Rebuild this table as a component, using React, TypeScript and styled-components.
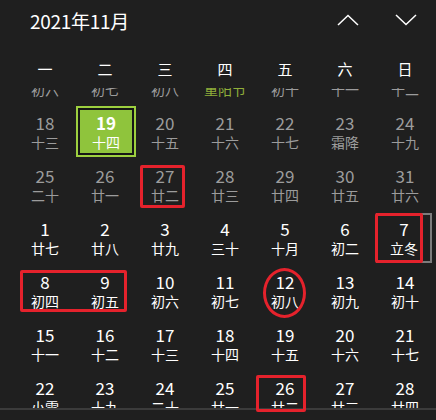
import styled, { createGlobalStyle } from "styled-components"

const GlobalStyle = createGlobalStyle`
  body {
    margin: 0;
    background: #1f1f1f;
    font-family: "Noto Sans CJK SC", "Noto Sans", sans-serif;
    color: #ffffff;
  }
`

const Panel = styled.div`
  position: relative;
  width: 436px;
  height: 420px;
  overflow: hidden;
  background: #1f1f1f;
`

const Header = styled.div`
  display: flex;
  align-items: center;
  justify-content: space-between;
  height: 40px;
  padding: 0 18px 0 30px;
`

const Title = styled.div`
  font-size: 19px;
  letter-spacing: -0.3px;
`

const NavGroup = styled.div`
  display: flex;
  align-items: center;
  gap: 34px;
`

const NavButton = styled.div`
  display: flex;
  align-items: center;
  justify-content: center;
  width: 24px;
  height: 24px;
`

const WeekRow = styled.div`
  display: grid;
  grid-template-columns: repeat(7, 60px);
  align-items: center;
  height: 40px;
  margin-top: 8px;
  padding-left: 16px;
  font-size: 15px;
`

const WeekDay = styled.div`
  text-align: center;
  padding-right: 2px;
`

const Viewport = styled.div`
  height: 320px;
  overflow: hidden;
`

const DayGrid = styled.div`
  display: grid;
  grid-template-columns: repeat(7, 60px);
  grid-auto-rows: 53px;
  margin-top: -34px;
  padding-left: 16px;
`

const DayCell = styled.div<{ $muted?: boolean; $today?: boolean; $hover?: boolean }>`
  display: flex;
  flex-direction: column;
  align-items: center;
  box-sizing: border-box;
  width: ${(p) => (p.$today ? 60 : p.$hover ? 56 : 58)}px;
  height: ${(p) => (p.$today ? 51 : 50)}px;
  margin-top: ${(p) => (p.$today ? -1 : 0)}px;
  padding-top: ${(p) => (p.$today ? 5 : p.$hover ? 4 : 6)}px;
  color: ${(p) => (p.$muted ? "#9c9c9c" : "#ffffff")};
  background: ${(p) => (p.$today ? "#8fc43c" : "transparent")};
  border: ${(p) => (p.$today ? "2px solid #9dd03f" : p.$hover ? "2px solid #7c7c7c" : "none")};
  box-shadow: ${(p) => (p.$today ? "inset 0 0 0 2px #161616" : "none")};
`

const DayNum = styled.div<{ $bold?: boolean }>`
  font-size: 17px;
  line-height: 20px;
  font-weight: ${(p) => (p.$bold ? 700 : 400)};
`

const Lunar = styled.div<{ $festival?: boolean }>`
  font-size: 14px;
  line-height: 18px;
  color: ${(p) => (p.$festival ? "#8fae3a" : "inherit")};
`

const Divider = styled.div`
  height: 2px;
  background: #3b3b3b;
`

const Mark = styled.div<{ $round?: boolean }>`
  position: absolute;
  box-sizing: border-box;
  border: 3px solid #e5222c;
  border-radius: ${(p) => (p.$round ? "50%" : "2px")};
  pointer-events: none;
`

type Day = { d: number; lunar: string; muted?: boolean; festival?: boolean }

const octLunar: Record<number, string> = {
  11: "初六", 12: "初七", 13: "初八", 14: "重阳节", 15: "初十", 16: "十一", 17: "十二",
  18: "十三", 19: "十四", 20: "十五", 21: "十六", 22: "十七", 23: "霜降", 24: "十九",
  25: "二十", 26: "廿一", 27: "廿二", 28: "廿三", 29: "廿四", 30: "廿五", 31: "廿六",
}

const novLunar = [
  "廿七", "廿八", "廿九", "三十", "十月", "初二", "立冬",
  "初四", "初五", "初六", "初七", "初八", "初九", "初十",
  "十一", "十二", "十三", "十四", "十五", "十六", "十七",
  "小雪", "十九", "二十", "廿一", "廿二", "廿三", "廿四",
]

const days: Day[] = [
  ...Object.keys(octLunar).map((k) => ({
    d: Number(k),
    lunar: octLunar[Number(k)],
    muted: true,
    festival: Number(k) === 14,
  })),
  ...novLunar.map((l, i) => ({ d: i + 1, lunar: l })),
]

const Chevron = ({ up }: { up?: boolean }) => (
  <svg width="22" height="12" viewBox="0 0 22 12">
    <polyline
      points={up ? "1,11 11,1.5 21,11" : "1,1 11,10.5 21,1"}
      fill="none"
      stroke="#ffffff"
      strokeWidth="1.5"
    />
  </svg>
)

const weekNames = ["一", "二", "三", "四", "五", "六", "日"]

const App = () => {
  return <Panel>
    <GlobalStyle />
    <Header>
      <Title>2021年11月</Title>
      <NavGroup>
        <NavButton><Chevron up /></NavButton>
        <NavButton><Chevron /></NavButton>
      </NavGroup>
    </Header>
    <WeekRow>
      {weekNames.map((w) => <WeekDay key={w}>{w}</WeekDay>)}
    </WeekRow>
    <Viewport>
      <DayGrid>
        {days.map((day) => {
          const today = day.muted && day.d === 19
          const hover = !day.muted && day.d === 7
          return <DayCell key={(day.muted ? "o" : "n") + day.d} $muted={day.muted && !today} $today={today} $hover={hover}>
            <DayNum $bold={today}>{day.d}</DayNum>
            <Lunar $festival={day.festival}>{day.lunar}</Lunar>
          </DayCell>
        })}
      </DayGrid>
    </Viewport>
    <Divider />

    <Mark style={{ left: 140, top: 165, width: 45, height: 43 }} />
    <Mark style={{ left: 375, top: 213, width: 48, height: 50 }} />
    <Mark style={{ left: 20, top: 270, width: 107, height: 42 }} />
    <Mark $round style={{ left: 263, top: 268, width: 43, height: 50 }} />
    <Mark style={{ left: 256, top: 375, width: 50, height: 37 }} />
  </Panel>
}

export default App
